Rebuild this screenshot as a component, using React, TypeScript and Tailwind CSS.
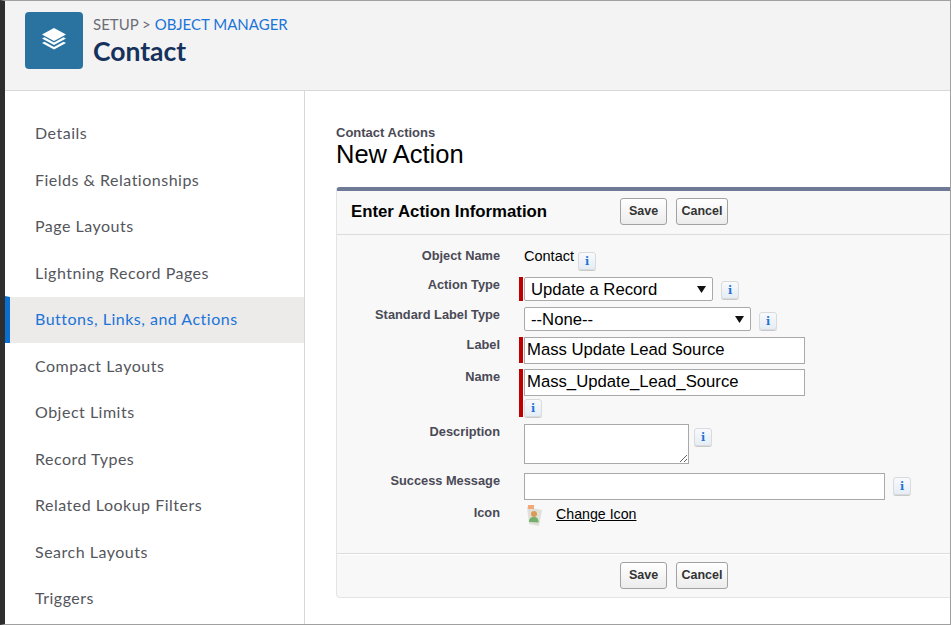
import { ReactNode } from 'react'

const navItems = [
  'Details',
  'Fields & Relationships',
  'Page Layouts',
  'Lightning Record Pages',
  'Buttons, Links, and Actions',
  'Compact Layouts',
  'Object Limits',
  'Record Types',
  'Related Lookup Filters',
  'Search Layouts',
  'Triggers',
]

/* ── Small "i" help button ── */
const InfoButton = ({ className = '' }: { className?: string }) => (
  <span
    className={`flex h-[18px] w-[18px] shrink-0 items-center justify-center rounded-[3px] border border-[#d8dadc] bg-gradient-to-b from-[#f8fafc] to-[#e6edf5] font-['DejaVu_Serif',serif] text-[11px] font-bold leading-none text-[#1b74d8] shadow-[0_1px_0_#c9c9c9] ${className}`}
  >
    i
  </span>
)

const FormButton = ({ label, className = '' }: { label: string; className?: string }) => (
  <button
    className={`h-[27px] rounded-[3px] border border-[#a2a2a2] bg-gradient-to-b from-white to-[#ececec] text-center font-['Liberation_Sans',sans-serif] text-[12.5px] font-bold text-[#333] ${className}`}
  >
    {label}
  </button>
)

const ButtonGroup = () => (
  <div className="flex gap-[9px]">
    <FormButton label="Save" className="w-[47px]" />
    <FormButton label="Cancel" className="w-[52px]" />
  </div>
)

/* ── Form row: label column, required bar, field ── */
const Row = ({
  label,
  labelClass = 'pt-[1px]',
  required,
  className = '',
  children,
}: {
  label: string
  labelClass?: string
  required?: boolean
  className?: string
  children: ReactNode
}) => (
  <div className={`flex ${className}`}>
    <div className={`w-[163px] shrink-0 text-right text-[12.8px] font-bold leading-[14px] text-[#4a4a56] ${labelClass}`}>{label}</div>
    <div className="ml-[19px] w-[4px] shrink-0">
      {required && <div className="h-full w-[4px] bg-[#c00000]" />}
    </div>
    <div className="ml-px flex min-w-0 flex-1 items-start">{children}</div>
  </div>
)

const SelectField = ({ value, width }: { value: string; width: string }) => (
  <div className={`relative h-[24px] ${width}`}>
    <select className="h-full w-full appearance-none rounded-[2px] border border-[#a9a9a9] bg-white pl-[6px] pt-[2px] font-['Liberation_Sans',sans-serif] text-[16.7px] leading-none text-black">
      <option>{value}</option>
    </select>
    <svg className="absolute right-[7px] top-[9px]" width="9" height="7" viewBox="0 0 9 7">
      <path d="M0 0h9L4.5 7z" fill="#111" />
    </svg>
  </div>
)

const TextField = ({ value, width }: { value?: string; width: string }) => (
  <input
    readOnly
    value={value ?? ''}
    className={`h-[27px] border border-[#a9a9a9] bg-white px-[2px] pb-[2px] font-['Liberation_Sans',sans-serif] text-[16.7px] text-black ${width}`}
  />
)

export default function App() {
  return (
    <div className="flex h-[625px] w-[951px] flex-col overflow-hidden border-b border-r border-t border-[#a0a0a0] border-l-[5px] border-l-[#2e2e2e] bg-white font-['Liberation_Sans',sans-serif]">
      {/* Header */}
      <header className="flex h-[90px] shrink-0 border-b border-[#d8d8d8] bg-[#f3f3f3] pl-[20px] pt-[11px]">
        <div className="flex h-[57px] w-[58px] items-center justify-center rounded-[4px] bg-[#2a73a0]">
          <svg width="26" height="25" viewBox="0 0 26 25" fill="white">
            <path d="M13 0 25 6.500 13 13 1 6.500z" />
            <path d="M1 10.500 3.500 9.200 13 14.400l9.500-5.200 2.500 1.300L13 17z" />
            <path d="M1 15 3.500 13.700 13 18.900l9.500-5.200L25 15 13 21.500z" />
          </svg>
        </div>
        <div className="ml-[10px] font-['Lato',sans-serif]">
          <div className="mt-[2px] text-[15px] leading-[20px] text-[#6d6d75]">
            SETUP &gt; <span className="text-[#1b74d8]">OBJECT MANAGER</span>
          </div>
          <h1 className="mt-[2px] text-[26.5px] font-bold leading-[30px] text-[#16325c]">Contact</h1>
        </div>
      </header>

      <div className="flex min-h-0 flex-1">
        {/* Sidebar */}
        <nav className="w-[300px] shrink-0 border-r border-[#d8d8d8] pt-[19px] font-['Lato',sans-serif] text-[16px] tracking-[0.5px] text-[#54565c]">
          {navItems.map((item) =>
            item === 'Buttons, Links, and Actions' ? (
              <div
                key={item}
                className="flex h-[46.5px] items-center border-l-[5px] border-t border-l-[#0b6fcf] border-t-white bg-[#ecebea] bg-clip-padding pb-[1px] pl-[25px] text-[#1b74d8]"
              >
                {item}
              </div>
            ) : (
              <div key={item} className="flex h-[46.5px] items-center pl-[30px]">
                {item}
              </div>
            ),
          )}
        </nav>

        {/* Main */}
        <main className="min-w-0 flex-1 pl-[31px] pt-[36px]">
          <div className="text-[13px] font-bold leading-[12px] text-[#4a4a56]">Contact Actions</div>
          <h2 className="text-[25.5px] leading-[30px] text-black">New Action</h2>

          <section className="mt-[18px] h-[411px] rounded-bl-[4px] rounded-tl-[4px] border-b border-l border-t-[4px] border-[#e4e4e4] border-t-[#6f7a96] bg-[#f8f8f8]">
            <div className="flex h-[44px] items-center border-b border-[#dcdcdc] pb-[2px] pl-[14px]">
              <h3 className="w-[269px] text-[16.8px] font-bold text-black">Enter Action Information</h3>
              <ButtonGroup />
            </div>

            <div className="h-[318px]">
              <Row label="Object Name" labelClass="pt-[2px]" className="pt-[12px]">
                <span className="text-[14.5px] leading-[18px] text-black">Contact</span>
                <InfoButton className="ml-[4px] mt-[5px]" />
              </Row>
              <Row label="Action Type" className="mt-[7px] h-[24px]" required>
                <SelectField value="Update a Record" width="w-[189px]" />
                <InfoButton className="ml-[8px] mt-[4px]" />
              </Row>
              <Row label="Standard Label Type" className="mt-[6px]">
                <SelectField value="--None--" width="w-[227px]" />
                <InfoButton className="ml-[8px] mt-[5px]" />
              </Row>
              <Row label="Label" required className="mt-[6px] h-[26px]">
                <TextField value="Mass Update Lead Source" width="w-[281px]" />
              </Row>
              <Row label="Name" required className="mt-[6px] h-[48px]">
                <div>
                  <TextField value="Mass_Update_Lead_Source" width="block w-[281px]" />
                  <InfoButton className="mt-[3px]" />
                </div>
              </Row>
              <Row label="Description" className="mt-[7px]">
                <textarea readOnly className="block h-[40px] w-[165px] border border-[#a9a9a9] bg-white" />
                <InfoButton className="ml-[5px] mt-[4px]" />
              </Row>
              <Row label="Success Message" className="mt-[9px]">
                <TextField width="w-[361px]" />
                <InfoButton className="ml-[8px] mt-[4px]" />
              </Row>
              <Row label="Icon" labelClass="pt-[3px]" className="mt-[3px]">
                <svg className="ml-[2px] mt-[2px]" width="18" height="22" viewBox="0 0 18 22">
                  <path d="M1 2 16 5 13 21 3 19z" fill="#dfe0da" />
                  <path d="M2 0h6v4H2z" fill="#f3a878" />
                  <circle cx="8" cy="9" r="3" fill="#dd9a55" />
                  <path d="M3 17c0-4 2-5 5-5s4.500 1.500 4.500 5.500z" fill="#74b06c" />
                </svg>
                <a className="ml-[12px] mt-[2px] text-[14.2px] leading-[18px] text-black underline">Change Icon</a>
              </Row>
            </div>

            <div className="flex h-[43px] items-center border-t border-[#dcdcdc] pl-[283px] shadow-[inset_0_1px_0_#fff]">
              <ButtonGroup />
            </div>
          </section>
        </main>
      </div>
    </div>
  )
}
